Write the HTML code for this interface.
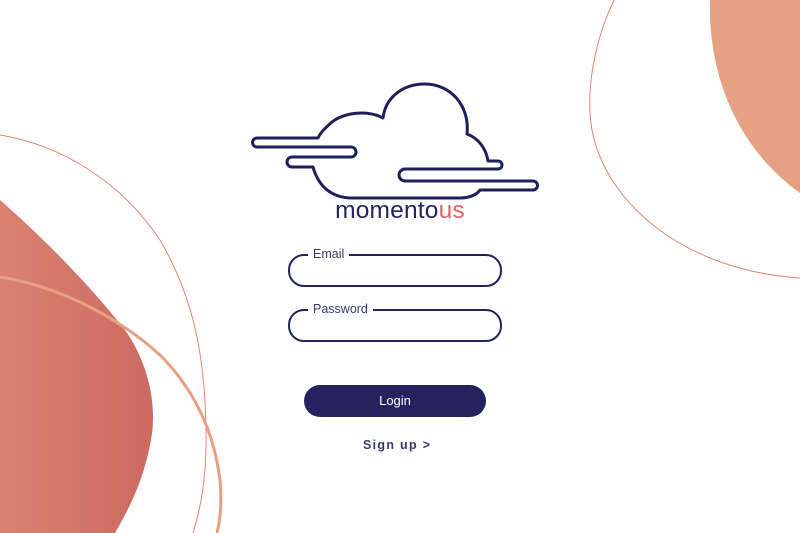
<!DOCTYPE html>
<html><head><meta charset="utf-8"><style>
html,body{margin:0;padding:0;width:800px;height:533px;overflow:hidden;background:#fff;font-family:"Liberation Sans",sans-serif}
svg.bg{position:absolute;left:0;top:0}
.field{position:absolute;left:288px;width:210px;height:29px;border:2px solid #25235f;border-radius:16px}
.field span{position:absolute;top:-10px;left:18px;background:#fff;padding:0 5px;font-size:12.5px;color:#3a3a66;line-height:16px}
.btn{position:absolute;left:304px;top:385px;width:182px;height:32px;border-radius:16px;background:#25235f;color:#fff;font-size:13px;text-align:center;line-height:32px}
.sign{position:absolute;left:363px;top:438px;font-size:12.5px;letter-spacing:1.3px;color:#25235f;font-weight:600;opacity:.9}
.logo{position:absolute;left:0;top:197px;width:800px;text-align:center;font-size:24.5px;color:#25235f;letter-spacing:0.2px}
</style></head><body>
<svg class="bg" width="800" height="533" viewBox="0 0 800 533">
<defs>
<linearGradient id="g1" x1="0" x2="1"><stop offset="0" stop-color="#da8274"/><stop offset="1" stop-color="#cc6a60"/></linearGradient>
</defs>
<path d="M0,200 C40,235 90,285 125,330 C150,365 158,410 150,445 C142,485 128,510 115,533 L0,533 Z" fill="url(#g1)"/>
<path d="M0,135 C60,145 120,180 160,240 C195,300 205,360 206,430 C207,480 200,510 193,533" fill="none" stroke="#e1877a" stroke-width="1"/>
<path d="M0,277 C50,285 110,310 160,355 C200,395 215,440 220,480 C222,505 220,520 217,533" fill="none" stroke="#e8a083" stroke-width="3"/>
<path d="M710,0 C708,80 740,150 800,193 L800,0 Z" fill="#e6a084"/>
<path d="M614,0 C595,40 585,90 592,130 C605,200 680,270 800,278" fill="none" stroke="#e1877a" stroke-width="1"/>
<path d="M318,138 L257,138 a4.5,4.5 0 0 0 0,9 L351,147 a5,5 0 0 1 0,10 L292,157 a5,5 0 0 0 0,10 L313,167 C318,185 330,197 350,198 L460,198 C472,198 478,193 480,190 L533,190 a4.5,4.5 0 0 0 0,-9 L405,181 a6,6 0 0 1 0,-12 L498,169 a4,4 0 0 0 0,-8 L488,161 C486,148 478,138 467,134 C470,105 450,84 425,84 C400,84 385,100 383,118 C368,110 345,112 332,122 C325,128 320,133 318,138 Z" fill="none" stroke="#1f1f5c" stroke-width="3" stroke-linejoin="round"/>
</svg>
<div class="logo">momento<span style="color:#e5606a">us</span></div>
<div class="field" style="top:254px"><span>Email</span></div>
<div class="field" style="top:309px"><span>Password</span></div>
<div class="btn">Login</div>
<div class="sign">Sign up &gt;</div>
</body></html>
